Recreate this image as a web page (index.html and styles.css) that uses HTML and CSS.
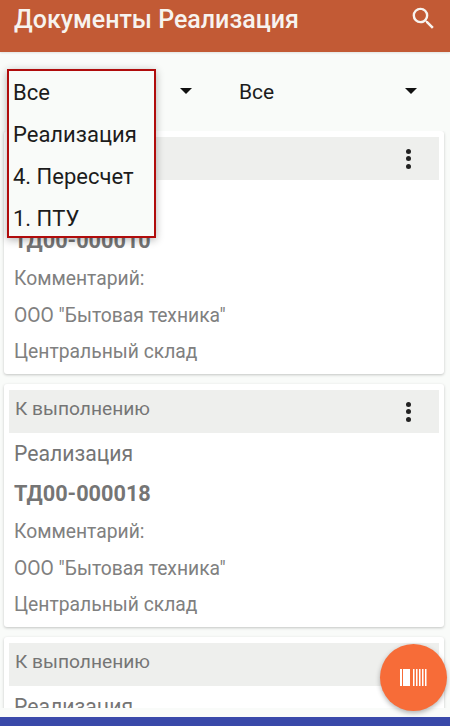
FILE: index.html
```html
<!DOCTYPE html>
<html lang="ru">
<head>
  <meta charset="UTF-8" />
  <meta name="viewport" content="width=device-width, initial-scale=1.0" />
  <title>Документы Реализация</title>
  <link rel="stylesheet" href="styles.css">
</head>
<body>
  <div class="screen">
    <header class="toolbar">
      <h1>Документы Реализация</h1>
      <svg class="search-icon" viewBox="0 0 24 24" width="29" height="29">
        <path fill="#f7f3ef" d="M15.5 14h-.79l-.28-.27A6.47 6.47 0 0 0 16 9.5 6.5 6.5 0 1 0 9.5 16c1.61 0 3.09-.59 4.23-1.57l.27.28v.79l5 4.99L20.49 19l-4.99-5zm-6 0C7.01 14 5 11.99 5 9.5S7.01 5 9.5 5 14 7.01 14 9.5 11.99 14 9.5 14z"/>
      </svg>
    </header>

    <div class="filters">
      <div class="filter">
        <span>Все</span>
        <i class="arrow"></i>
      </div>
      <div class="filter">
        <span>Все</span>
        <i class="arrow"></i>
      </div>
    </div>

    <div class="list">
      <div class="card">
        <div class="card-head">
          <span>К выполнению</span>
          <div class="dots"><i></i><i></i><i></i></div>
        </div>
        <div class="card-type">Реализация</div>
        <div class="card-num">ТД00-000010</div>
        <div class="card-line">Комментарий:</div>
        <div class="card-line">ООО "Бытовая техника"</div>
        <div class="card-line">Центральный склад</div>
      </div>

      <div class="card">
        <div class="card-head">
          <span>К выполнению</span>
          <div class="dots"><i></i><i></i><i></i></div>
        </div>
        <div class="card-type">Реализация</div>
        <div class="card-num">ТД00-000018</div>
        <div class="card-line">Комментарий:</div>
        <div class="card-line">ООО "Бытовая техника"</div>
        <div class="card-line">Центральный склад</div>
      </div>

      <div class="card">
        <div class="card-head">
          <span>К выполнению</span>
          <div class="dots"><i></i><i></i><i></i></div>
        </div>
        <div class="card-type">Реализация</div>
      </div>
    </div>

    <div class="bottom-bar"></div>

    <div class="dropdown">
      <div>Все</div>
      <div>Реализация</div>
      <div>4. Пересчет</div>
      <div>1. ПТУ</div>
    </div>

    <button class="fab">
      <svg viewBox="0 0 27 17" width="27" height="17">
        <path fill="#fff" d="M0 0h2v17H0zM3 0h7v17H3zM13 0h1.5v17H13zM16 0h1.5v17H16zM19 0h1.5v17H19zM22 0h1.5v17H22zM25 0h1.5v17H25z"/>
      </svg>
    </button>
  </div>
</body>
</html>
```

FILE: styles.css
```css
* {
  box-sizing: border-box;
}

html, body {
  margin: 0;
  height: 100%;
}

body {
  font-family: Roboto, sans-serif;
  background-color: #f9fbf9;
}

.screen {
  position: relative;
  width: 450px;
  height: 726px;
  display: flex;
  flex-direction: column;
  overflow: hidden;
}

.toolbar {
  flex: none;
  height: 52px;
  background-color: #c25a35;
  display: flex;
  justify-content: space-between;
  padding: 0 14px;
  box-shadow: 0 1px 2px rgba(0, 0, 0, 0.1);
}

.toolbar h1 {
  margin: 0;
  padding-top: 4px;
  font-size: 25px;
  line-height: 32px;
  font-weight: 500;
  color: #f7f3ef;
}

.search-icon {
  margin: 4px -2px 0 0;
}

.filters {
  flex: none;
  height: 79px;
  display: flex;
  padding: 0 14px;
}

.filter {
  width: 225px;
  height: 80px;
  padding-top: 24px;
  display: flex;
  justify-content: space-between;
  font-size: 21px;
  line-height: 32px;
  color: #1c1c1c;
}

.filter:last-child {
  width: 178px;
}

.filter .arrow {
  width: 0;
  height: 0;
  margin: 12px 47px 0 0;
  border-left: 6px solid transparent;
  border-right: 6px solid transparent;
  border-top: 6px solid #111;
}

.filter:last-child .arrow {
  margin-right: 0;
}

.list {
  flex: 1;
  overflow: hidden;
  margin-bottom: 9px;
  padding: 0 6px 0 4px;
}

.card {
  height: 243px;
  margin-bottom: 10px;
  padding: 6px 5px 0;
  background-color: #fff;
  border-radius: 3px;
  box-shadow: 0 1px 3px rgba(0, 0, 0, 0.22);
}

.card-head {
  height: 43px;
  background-color: #eeefed;
  padding: 0 0 6px 6px;
  display: flex;
  justify-content: space-between;
  align-items: center;
  font-size: 19.2px;
  color: #757575;
}

.dots {
  display: flex;
  flex-direction: column;
  gap: 2.5px;
  margin: 6px 28px 0 0;
}

.dots i {
  width: 5px;
  height: 5px;
  border-radius: 50%;
  background-color: #222;
}

.card-type {
  padding: 4px 0 0 5px;
  font-size: 21.2px;
  line-height: 34px;
  color: #757575;
}

.card-num {
  padding: 5px 0 0 5px;
  font-size: 21.7px;
  line-height: 36px;
  font-weight: 700;
  color: #757575;
}

.card-line {
  padding-left: 5px;
  font-size: 19.3px;
  line-height: 36.5px;
  color: #808080;
}

.card-num + .card-line {
  margin-top: 2px;
}

.bottom-bar {
  flex: none;
  height: 9px;
  background-color: #3949a9;
}

.dropdown {
  position: absolute;
  left: 7px;
  top: 69px;
  width: 149px;
  height: 169px;
  padding: 1px 4px 0;
  background-color: #f9fbf9;
  border: 2px solid #b00c0c;
  box-shadow: 0 2px 8px rgba(0, 0, 0, 0.3);
  font-size: 22px;
  line-height: 42px;
  color: #1c1c1c;
}

.fab {
  position: absolute;
  left: 380px;
  top: 644px;
  width: 67px;
  height: 67px;
  padding: 0;
  border: none;
  border-radius: 50%;
  background-color: #f76c38;
  box-shadow: 0 2px 5px rgba(0, 0, 0, 0.3);
  display: flex;
  align-items: center;
  justify-content: center;
}
```
